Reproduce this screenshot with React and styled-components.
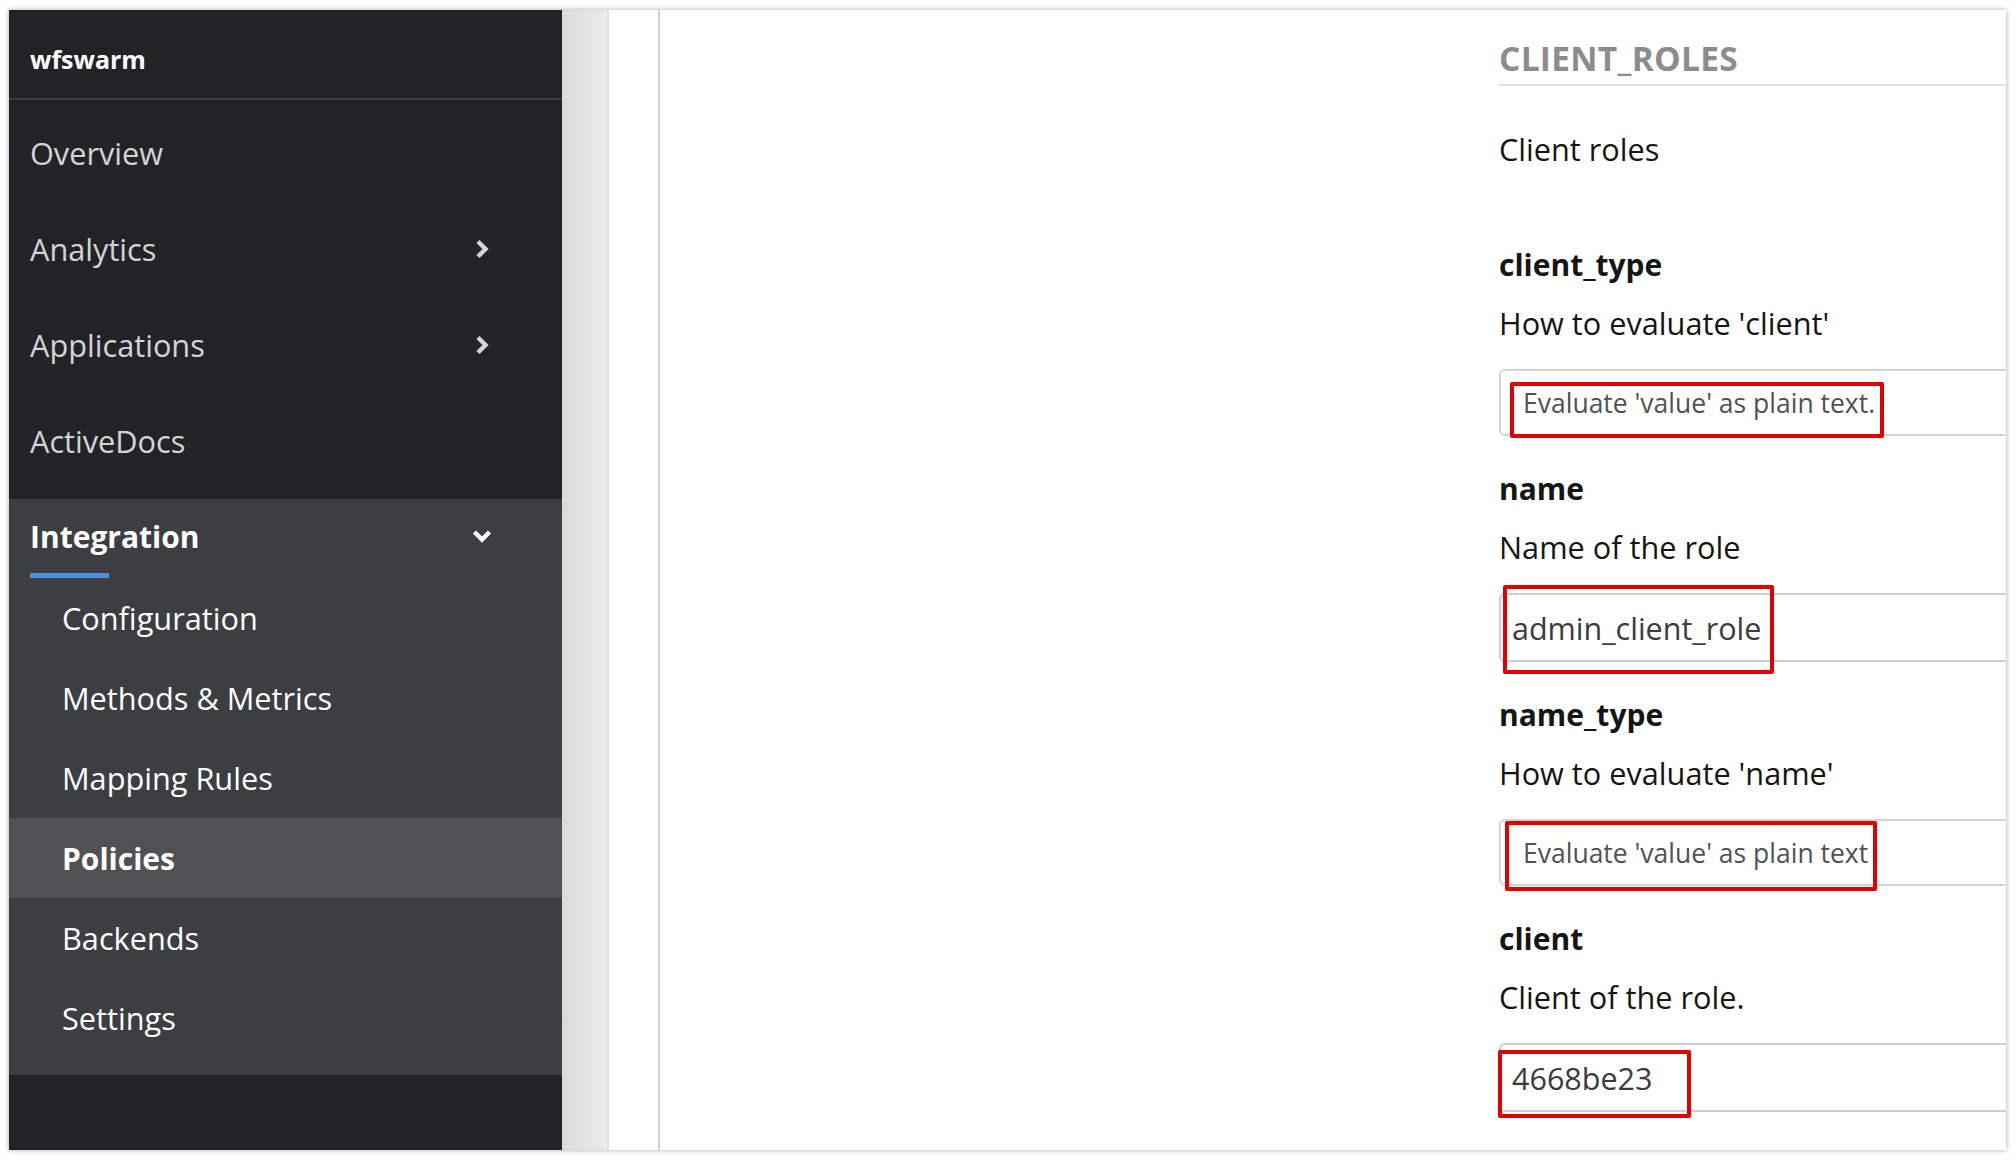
import React from "react";
import styled, { createGlobalStyle } from "styled-components";

const GlobalStyle = createGlobalStyle`
  html, body {
    margin: 0;
    padding: 0;
    background: #fff;
  }
  body {
    font-family: "Open Sans", "Liberation Sans", sans-serif;
  }
`;

const Page = styled.div`
  width: 2016px;
  height: 1160px;
  box-sizing: border-box;
  padding: 10px 10px 10px 9px;
  background: #fff;
`;

const Frame = styled.div`
  display: flex;
  width: 1997px;
  height: 1140px;
  overflow: hidden;
  box-shadow: 0 0 5px rgba(0, 0, 0, 0.35);
`;

/* ---------- sidebar ---------- */

const Sidebar = styled.nav`
  width: 553px;
  flex-shrink: 0;
  display: flex;
  flex-direction: column;
  background: #222327;
`;

const Brand = styled.div`
  height: 90px;
  box-sizing: border-box;
  padding: 10px 0 0 21px;
  display: flex;
  align-items: center;
  border-bottom: 2px solid #3a3c40;
  color: #fff;
  font-size: 25px;
  font-weight: 700;
`;

const NavList = styled.div`
  display: flex;
  flex-direction: column;
  padding: 5px 0 10px;
`;

const NavItem = styled.div`
  height: ${(p) => (p.$sub ? 80 : 96)}px;
  display: flex;
  align-items: center;
  justify-content: space-between;
  padding: 0 68px 0 ${(p) => (p.$sub ? 53 : 21)}px;
  background: ${(p) => (p.$active ? "#505155" : "transparent")};
  color: ${(p) => (p.$sub || p.$bold ? "#fff" : "#d4d4d4")};
  font-size: ${(p) => (p.$bold ? 30 : 30.7)}px;
  font-weight: ${(p) => (p.$bold ? 700 : 400)};
`;

const Section = styled.div`
  background: #3d3e42;
  padding-bottom: 17px;
`;

const SectionHead = styled(NavItem)`
  height: 74px;
`;

const Underline = styled.div`
  width: 79px;
  height: 5px;
  margin-left: 21px;
  background: #4b91e1;
`;

const ChevronBox = styled.span`
  width: 24px;
  display: flex;
  justify-content: center;
  align-items: center;
`;

function Chevron({ dir, color }) {
  return (
    <ChevronBox>
      {dir === "right" ? (
        <svg width="14" height="20" viewBox="0 0 14 20">
          <polyline points="3,2.5 10.5,10 3,17.5" fill="none" stroke={color} strokeWidth="4.5" />
        </svg>
      ) : (
        <svg width="20" height="14" viewBox="0 0 20 14">
          <polyline points="2.5,3 10,10.5 17.5,3" fill="none" stroke={color} strokeWidth="4.5" />
        </svg>
      )}
    </ChevronBox>
  );
}

/* ---------- main ---------- */

const Gutter = styled.div`
  width: 47px;
  flex-shrink: 0;
  background: linear-gradient(to right, #dadada, #ededed);
  box-shadow: inset -2px 0 2px rgba(0, 0, 0, 0.06);
`;

const Main = styled.main`
  flex: 1;
  display: flex;
  background: #fff;
  min-width: 0;
`;

const Spacer = styled.div`
  width: 49px;
  flex-shrink: 0;
`;

const Panel = styled.div`
  flex: 1;
  display: grid;
  grid-template-columns: 839px 1fr;
  border-left: 2px solid #d2d2d2;
  min-width: 0;
`;

const Form = styled.div`
  display: flex;
  flex-direction: column;
  padding-top: 28px;
  color: #151515;
`;

const PolicyTitle = styled.h2`
  margin: 0;
  padding-bottom: 6px;
  border-bottom: 2px solid #e2e2e2;
  line-height: 40px;
  font-size: 33.5px;
  font-weight: 700;
  letter-spacing: 0.3px;
  color: #8a8d90;
`;

const Text = styled.div`
  line-height: 40px;
  font-size: ${(p) => (p.$bold ? 30 : 30.7)}px;
  font-weight: ${(p) => (p.$bold ? 700 : 400)};
  margin-top: ${(p) => p.$mt || 0}px;
`;

const Fields = styled.div`
  display: flex;
  flex-direction: column;
  gap: 33px;
  margin-top: 76px;
`;

const Control = styled.div`
  position: relative;
  margin-top: 26px;
  width: calc(100% + 40px);
  height: ${(p) => (p.$select ? 67 : 69)}px;
  box-sizing: border-box;
  display: flex;
  align-items: center;
  border: 2px solid ${(p) => (p.$select ? "#d4d4d4" : "#cdcdcd")};
  border-radius: 6px 0 0 6px;
  padding-left: ${(p) => (p.$select ? 22 : 11)}px;
  font-size: ${(p) => (p.$select ? 26.5 : 30.5)}px;
  color: ${(p) => (p.$select ? "#4f5255" : "#393c40")};
  white-space: nowrap;
`;

const Callout = styled.span`
  position: absolute;
  left: ${(p) => p.$x}px;
  top: ${(p) => p.$y}px;
  width: ${(p) => p.$w}px;
  height: ${(p) => p.$h}px;
  box-sizing: border-box;
  border: 4px solid #e10000;
  border-radius: 2px;
`;

const fields = [
  {
    name: "client_type",
    help: "How to evaluate 'client'",
    value: "Evaluate 'value' as plain text.",
    select: true,
    mark: { x: 9, y: 11, w: 374, h: 56 },
  },
  {
    name: "name",
    help: "Name of the role",
    value: "admin_client_role",
    mark: { x: 2, y: -10, w: 271, h: 89 },
  },
  {
    name: "name_type",
    help: "How to evaluate 'name'",
    value: "Evaluate 'value' as plain text",
    select: true,
    mark: { x: 4, y: 0, w: 372, h: 70 },
  },
  {
    name: "client",
    help: "Client of the role.",
    value: "4668be23",
    mark: { x: -3, y: 5, w: 193, h: 68 },
  },
];

export default function App() {
  return (
    <>
      <GlobalStyle />
      <Page>
        <Frame>
          <Sidebar>
            <Brand>wfswarm</Brand>
            <NavList>
              <NavItem>Overview</NavItem>
              <NavItem>
                Analytics
                <Chevron dir="right" color="#d4d4d4" />
              </NavItem>
              <NavItem>
                Applications
                <Chevron dir="right" color="#d4d4d4" />
              </NavItem>
              <NavItem>ActiveDocs</NavItem>
            </NavList>
            <Section>
              <SectionHead $bold>
                Integration
                <Chevron dir="down" color="#fff" />
              </SectionHead>
              <Underline />
              {["Configuration", "Methods & Metrics", "Mapping Rules", "Policies", "Backends", "Settings"].map(
                (label) => (
                  <NavItem key={label} $sub $bold={label === "Policies"} $active={label === "Policies"}>
                    {label}
                  </NavItem>
                )
              )}
            </Section>
          </Sidebar>
          <Gutter />
          <Main>
            <Spacer />
            <Panel>
              <div />
              <Form>
                <PolicyTitle>CLIENT_ROLES</PolicyTitle>
                <Text $mt={43}>Client roles</Text>
                <Fields>
                  {fields.map((f) => (
                    <div key={f.name}>
                      <Text $bold>{f.name}</Text>
                      <Text $mt={18}>{f.help}</Text>
                      <Control $select={f.select}>
                        {f.value}
                        <Callout $x={f.mark.x} $y={f.mark.y} $w={f.mark.w} $h={f.mark.h} />
                      </Control>
                    </div>
                  ))}
                </Fields>
              </Form>
            </Panel>
          </Main>
        </Frame>
      </Page>
    </>
  );
}
